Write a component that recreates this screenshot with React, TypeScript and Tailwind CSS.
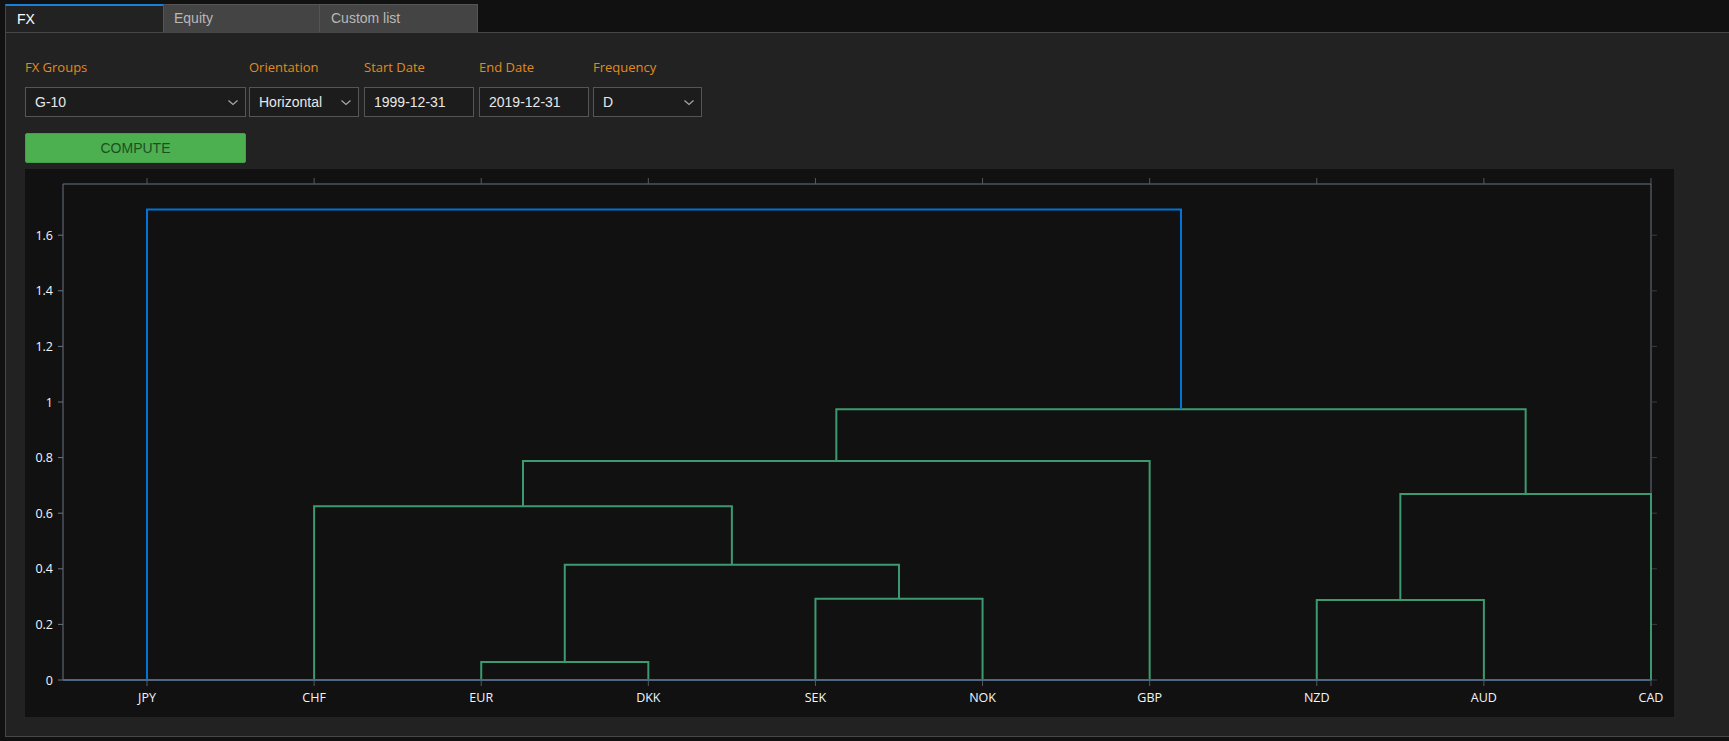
import React from "react";

const leaves = ["JPY", "CHF", "EUR", "DKK", "SEK", "NOK", "GBP", "NZD", "AUD", "CAD"];

const GREEN = "rgb(61,153,112)";
const BLUE = "rgb(0,116,217)";

// plot area inside the chart box
const PL = 38;
const PR = 1626;
const PT = 15;
const PB = 511;
const X = (i: number) => 122 + i * 167.11;
const Y = (v: number) => PB - v * 278;

// [leftPos, leftH, rightPos, rightH, top, colour]
const links: [number, number, number, number, number, string][] = [
  [2, 0, 3, 0, 0.065, GREEN],
  [4, 0, 5, 0, 0.292, GREEN],
  [7, 0, 8, 0, 0.288, GREEN],
  [2.5, 0.065, 4.5, 0.292, 0.415, GREEN],
  [1, 0, 3.5, 0.415, 0.625, GREEN],
  [2.25, 0.625, 6, 0, 0.788, GREEN],
  [7.5, 0.288, 9, 0, 0.669, GREEN],
  [4.125, 0.788, 8.25, 0.669, 0.974, GREEN],
  [0, 0, 6.1875, 0.974, 1.692, BLUE],
];

const yTicks = [0, 0.2, 0.4, 0.6, 0.8, 1, 1.2, 1.4, 1.6];

const Chevron = () => (
  <svg width="12" height="7" viewBox="0 0 12 7" className="shrink-0">
    <polyline points="1.5,1.5 6,5.5 10.5,1.5" fill="none" stroke="#a8a8a8" strokeWidth="1.2" />
  </svg>
);

const Field: React.FC<{ label: string; width: string; value: string; select?: boolean; className?: string }> = ({
  label,
  width,
  value,
  select,
  className,
}) => (
  <div className={`flex flex-col ${width} ${className ?? ""}`}>
    <span className="h-[16px] leading-[16px] text-[13px] text-[#e08c1c] font-['Open_Sans',sans-serif] mb-[12px]">
      {label}
    </span>
    <div className="h-[30px] bg-[#1c1c1c] border border-[#555] flex items-center justify-between pl-[9px] pr-[6px] text-[14px] text-[#e8e8e8]">
      <span>{value}</span>
      {select && <Chevron />}
    </div>
  </div>
);

const Dendrogram = () => (
  <svg width="1649" height="548" className="block">
    {/* frame */}
    <line x1={PL} y1={PT} x2={PR} y2={PT} stroke="#6a7383" strokeWidth="1" />
    <line x1={PL} y1={PT} x2={PL} y2={PB} stroke="#6a7383" strokeWidth="1" />
    <line x1={PR} y1={PT} x2={PR} y2={PB} stroke="#6a7383" strokeWidth="1" />
    {/* y ticks */}
    {yTicks.map((t) => (
      <g key={t}>
        <line x1={PL - 5} y1={Y(t)} x2={PL} y2={Y(t)} stroke="#6e7480" />
        <line x1={PR} y1={Y(t)} x2={PR + 6} y2={Y(t)} stroke="#3a3d42" />
        <text
          x={28}
          y={Y(t) + 4.5}
          textAnchor="end"
          fontSize="12.5"
          fill="#f2f5fa"
          fontFamily="'Open Sans', sans-serif"
        >
          {t}
        </text>
      </g>
    ))}
    {/* x ticks + labels */}
    {leaves.map((l, i) => (
      <g key={l}>
        <line x1={X(i)} y1={PT - 6} x2={X(i)} y2={PT} stroke="#55595f" />
        <line x1={X(i)} y1={PB} x2={X(i)} y2={PB + 6} stroke="#55595f" />
        <text
          x={X(i)}
          y={PB + 22}
          textAnchor="middle"
          fontSize="12.5"
          fill="#f2f5fa"
          fontFamily="'Open Sans', sans-serif"
        >
          {l}
        </text>
      </g>
    ))}
    {/* links */}
    {links.map(([a, ha, b, hb, top, c], k) => (
      <polyline
        key={k}
        points={`${X(a)},${Y(ha)} ${X(a)},${Y(top)} ${X(b)},${Y(top)} ${X(b)},${Y(hb)}`}
        fill="none"
        stroke={c}
        strokeWidth="2"
      />
    ))}
    <line x1={PL} y1={PB} x2={PR} y2={PB} stroke="#506784" strokeWidth="2" />
  </svg>
);

export default function App() {
  return (
    <div className="w-[1729px] h-[741px] bg-[#111] overflow-hidden font-['Liberation_Sans',Arial,sans-serif]">
      {/* tabs */}
      <div className="flex pl-[5px] pt-[4px] h-[32px]">
        <div className="w-[158px] h-[28px] bg-[#222] border-t-2 border-l border-[#1a7fd8] border-l-[#474747] flex items-center pl-[11px] text-[14px] text-white">
          FX
        </div>
        <div className="w-[157px] h-[28px] bg-[#444] border border-b-0 border-[#555] flex items-center pl-[10px] text-[14px] text-[#b8b8b8]">
          Equity
        </div>
        <div className="w-[158px] h-[28px] bg-[#444] border border-b-0 border-l-0 border-[#555] flex items-center pl-[11px] text-[14px] text-[#b8b8b8]">
          Custom list
        </div>
      </div>

      {/* panel */}
      <div className="ml-[5px] h-[705px] bg-[#222] border-t border-l border-b border-[#474747] pt-[26px] pl-[19px]">
        <div className="flex">
          <Field label="FX Groups" width="w-[221px]" value="G-10" select />
          <Field label="Orientation" width="w-[110px]" value="Horizontal" select className="ml-[3px]" />
          <Field label="Start Date" width="w-[110px]" value="1999-12-31" className="ml-[5px]" />
          <Field label="End Date" width="w-[110px]" value="2019-12-31" className="ml-[5px]" />
          <Field label="Frequency" width="w-[109px]" value="D" select className="ml-[4px]" />
        </div>

        <button className="mt-[16px] w-[221px] h-[30px] bg-[#4caf50] border border-[#44a048] rounded-[2px] text-[14px] text-[#1f4f21] flex items-center justify-center">
          COMPUTE
        </button>

        <div className="mt-[6px] w-[1649px] h-[548px] bg-[#111]">
          <Dendrogram />
        </div>
      </div>
    </div>
  );
}
